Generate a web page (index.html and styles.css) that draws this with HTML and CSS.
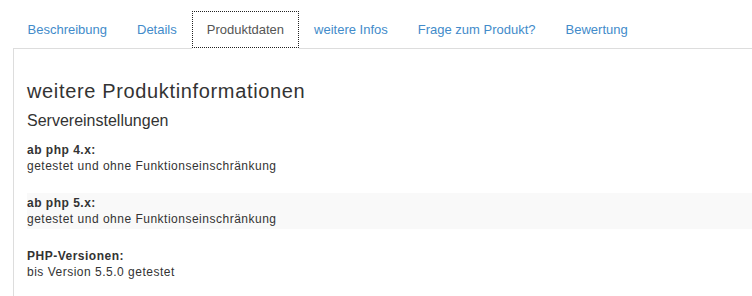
FILE: index.html
```html
<!DOCTYPE html>
<html lang="de">
<head>
<meta charset="utf-8">
<title>Produktdaten</title>
<link rel="stylesheet" href="styles.css">
</head>
<body>
<div class="wrap">
  <ul class="tabs">
    <li><a href="#">Beschreibung</a></li>
    <li><a href="#">Details</a></li>
    <li class="active"><a href="#">Produktdaten</a></li>
    <li><a href="#">weitere Infos</a></li>
    <li><a href="#">Frage zum Produkt?</a></li>
    <li><a href="#">Bewertung</a></li>
  </ul>
  <div class="panel">
    <h2 class="title">weitere Produktinformationen</h2>
    <h4 class="subtitle">Servereinstellungen</h4>
    <div class="items">
      <div class="item">
        <div class="label">ab php 4.x:</div>
        <div class="value">getestet und ohne Funktionseinschränkung</div>
      </div>
      <div class="item striped">
        <div class="label">ab php 5.x:</div>
        <div class="value">getestet und ohne Funktionseinschränkung</div>
      </div>
      <div class="item">
        <div class="label">PHP-Versionen:</div>
        <div class="value">bis Version 5.5.0 getestet</div>
      </div>
    </div>
  </div>
</div>
</body>
</html>
```

FILE: styles.css
```css
html, body {
  margin: 0;
  padding: 0;
  background: #fff;
}
body {
  font-family: "Liberation Sans", Arial, sans-serif;
  color: #333;
  font-size: 12px;
}
.wrap {
  padding: 11px 0 0 13px;
}
.tabs {
  display: flex;
  list-style: none;
  margin: 0;
  padding: 0;
  border-bottom: 1px solid #ddd;
}
.tabs li {
  margin: 0 1px -1px 0;
  padding-bottom: 1px;
}
.tabs a {
  display: block;
  padding: 8px 13.5px;
  line-height: 19px;
  font-size: 13px;
  color: #428bca;
  text-decoration: none;
  border: 1px solid transparent;
}
.tabs li.active {
  background: #fff;
}
.tabs li.active a {
  color: #555;
  border: 1px dotted #222;
}
.panel {
  border-left: 1px solid #ddd;
  padding: 10px 0 20px 13px;
}
.title {
  font-size: 20px;
  font-weight: normal;
  line-height: 22px;
  letter-spacing: 0.65px;
  margin: 21px 0 10px;
}
.subtitle {
  font-size: 16px;
  font-weight: normal;
  line-height: 18px;
  margin: 0 0 10px;
}
.items {
  display: flex;
  flex-direction: column;
  gap: 17px;
}
.item {
  padding: 2px 0;
  line-height: 16px;
  letter-spacing: 0.5px;
}
.item.striped {
  background: #f9f9f9;
}
.label {
  font-weight: bold;
}
```
